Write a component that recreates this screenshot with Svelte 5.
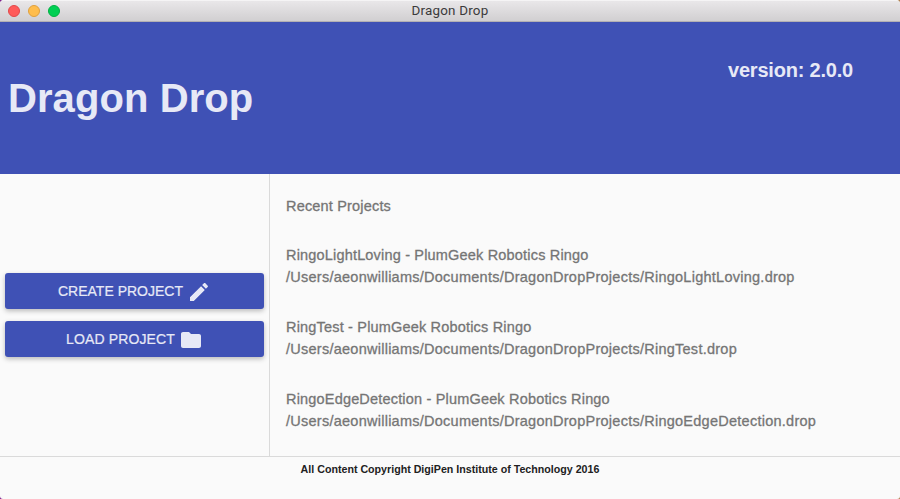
<script>
  const projects = [
    { name: 'RingoLightLoving', board: 'PlumGeek Robotics Ringo' },
    { name: 'RingTest', board: 'PlumGeek Robotics Ringo' },
    { name: 'RingoEdgeDetection', board: 'PlumGeek Robotics Ringo' }
  ];
  const root = '/Users/aeonwilliams/Documents/DragonDropProjects/';
</script>

<div class="desktop">
  <div class="window">
    <div class="titlebar">
      <div class="lights">
        <span class="light close"></span>
        <span class="light minimize"></span>
        <span class="light zoom"></span>
      </div>
      <span class="caption">Dragon Drop</span>
    </div>

    <header>
      <h1>Dragon Drop</h1>
      <span class="version">version: 2.0.0</span>
    </header>

    <main>
      <nav>
        <button>
          <span class="create">CREATE PROJECT</span>
          <svg viewBox="0 0 24 24"><path d="M3 17.25V21h3.75L17.81 9.94l-3.75-3.75L3 17.25zM20.71 7.04c.39-.39.39-1.02 0-1.41l-2.34-2.34c-.39-.39-1.02-.39-1.41 0l-1.83 1.83 3.75 3.75 1.83-1.83z" /></svg>
        </button>
        <button>
          <span class="load">LOAD PROJECT</span>
          <svg viewBox="0 0 24 24"><path d="M10 4H4c-1.1 0-1.99.9-1.99 2L2 18c0 1.1.9 2 2 2h16c1.1 0 2-.9 2-2V8c0-1.1-.9-2-2-2h-8l-2-2z" /></svg>
        </button>
      </nav>
      <section>
        <h2>Recent Projects</h2>
        {#each projects as p}
          <div class="project">
            <p class="name">{p.name} - {p.board}</p>
            <p class="path">{root}{p.name}.drop</p>
          </div>
        {/each}
      </section>
    </main>

    <footer>All Content Copyright DigiPen Institute of Technology 2016</footer>
  </div>
</div>

<style>
  .desktop {
    height: 499px;
    background: linear-gradient(90deg, #7b1f8c 50%, #b08050 50%);
    font-family: 'Liberation Sans', Arial, sans-serif;
  }
  .window {
    display: flex;
    flex-direction: column;
    height: 499px;
    border-radius: 4px 4px 3px 3px;
    overflow: hidden;
    background: #fafafa;
  }
  .titlebar {
    box-sizing: border-box;
    flex: none;
    display: grid;
    grid-template-columns: 1fr auto 1fr;
    align-items: center;
    height: 22px;
    background: linear-gradient(#e9e7e9, #d1cfd1);
    border-top: 1px solid #f5f4f5;
    border-bottom: 1px solid #b3b0b3;
  }
  .lights {
    display: flex;
    gap: 8px;
    padding-left: 8px;
  }
  .light {
    box-sizing: border-box;
    width: 12px;
    height: 12px;
    border-radius: 50%;
  }
  .close { background: #ff5b5a; border: 1px solid #e2484a; }
  .minimize { background: #ffbd4c; border: 1px solid #dfa03e; }
  .zoom { background: #00cf53; border: 1px solid #00b043; }
  .caption {
    font: 13.4px/20px Roboto, sans-serif;
    letter-spacing: 0.2px;
    color: #3b3a3b;
  }
  header {
    flex: none;
    display: flex;
    justify-content: space-between;
    align-items: center;
    height: 152px;
    padding: 0 47px 0 8px;
    box-sizing: border-box;
    background: #3f51b5;
    color: #e7e9f6;
  }
  h1 {
    margin: 0;
    font-size: 40px;
    line-height: 48px;
    letter-spacing: 0.08px;
  }
  .version {
    align-self: flex-start;
    margin-top: 36px;
    font-size: 20px;
    font-weight: bold;
    line-height: 24px;
    letter-spacing: -0.2px;
  }
  main {
    flex: none;
    display: flex;
    height: 282px;
  }
  nav {
    box-sizing: border-box;
    display: flex;
    flex-direction: column;
    justify-content: center;
    gap: 12px;
    width: 270px;
    padding: 0 5px;
    border-right: 1px solid #dadada;
  }
  button {
    display: flex;
    align-items: center;
    justify-content: center;
    gap: 4px;
    height: 36px;
    padding: 0;
    border: 0;
    border-radius: 3px;
    background: #3f51b5;
    box-shadow: 0 2px 5px rgba(0, 0, 0, 0.26);
    color: #e7e9f6;
    font: 14px/36px 'Liberation Sans', Arial, sans-serif;
    -webkit-text-stroke: 0.2px;
  }
  .load {
    letter-spacing: 0.12px;
  }
  button svg {
    width: 24px;
    height: 24px;
    fill: #e7e9f6;
    stroke: none;
    -webkit-text-stroke: 0;
    position: relative;
    top: 1px;
  }
  section {
    padding: 21px 0 0 16px;
    color: #757575;
    -webkit-text-stroke: 0.3px;
  }
  h2, p {
    margin: 0;
    font-size: 14.5px;
    font-weight: normal;
    line-height: 22px;
    letter-spacing: 0.18px;
  }
  .path { letter-spacing: 0.255px; }
  h2 { margin-bottom: 27px; }
  .project { margin-bottom: 28px; }
  footer {
    flex: 1;
    border-top: 1px solid #dadada;
    padding-top: 6px;
    text-align: center;
    font-size: 10.67px;
    font-weight: bold;
    line-height: 13px;
    color: #212121;
  }
</style>
